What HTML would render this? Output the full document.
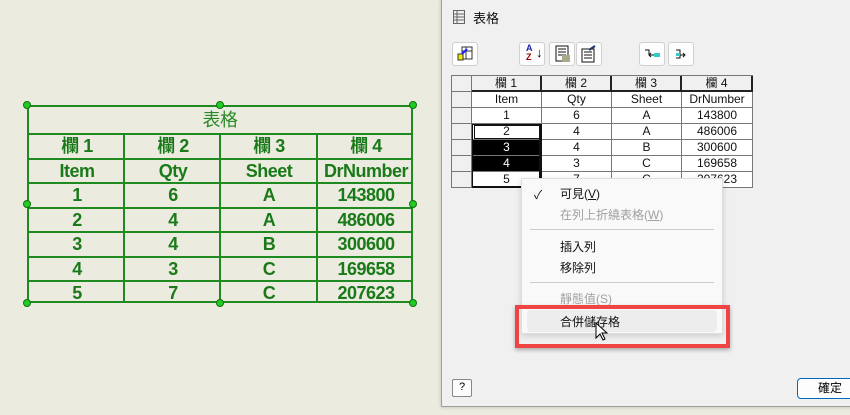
<!DOCTYPE html>
<html><head><meta charset="utf-8"><style>
*{margin:0;padding:0;box-sizing:border-box}
body{width:850px;height:415px;background:#ecebdf;position:relative;overflow:hidden;font-family:"Liberation Sans","Noto Sans CJK TC",sans-serif}
.abs{position:absolute}
.lt{position:absolute;left:27px;top:105px;width:386px;height:198px;border:2px solid #1f8a1f}
.lt .h{position:absolute;background:#1f8a1f;height:2px;left:0;right:0}
.lt .v{position:absolute;background:#1f8a1f;width:2px}
.lt .c{position:absolute;width:96px;text-align:center;color:#1a7a1a;font-size:18px;line-height:24px;font-weight:bold;letter-spacing:-0.5px}
.dot{position:absolute;width:8px;height:8px;border-radius:50%;background:#22cc22;border:1px solid #107010}
.dlg{position:absolute;left:441px;top:0;width:420px;height:407px;background:#f0f0f0;border-left:1px solid #a0a0a0;border-bottom:1px solid #a0a0a0;box-shadow:0 0 4px rgba(0,0,0,.2)}
.btn{position:absolute;top:42px;width:26px;height:24px;background:#fdfdfd;border:1px solid #d0d0d0;border-radius:3px}
.g{position:absolute;border-right:1px solid #777;border-bottom:1px solid #777;font-size:12px;text-align:center;line-height:15px;color:#111;background:#fff}
.rh{background:#f0f0f0}
.menu{position:absolute;left:521px;top:178px;width:202px;height:156px;background:#f9f9f9;border:1px solid #ddd;box-shadow:0 2px 6px rgba(0,0,0,.15);font-size:12px}
.mi{position:absolute;left:38px;color:#111}
.dis{color:#a0a0a0}
.sep{position:absolute;left:8px;right:8px;height:1px;background:#ccc}
</style></head><body>
<div class="lt">
 <div class="h" style="top:26px"></div><div class="h" style="top:51px"></div><div class="h" style="top:75px"></div><div class="h" style="top:100px"></div><div class="h" style="top:124px"></div><div class="h" style="top:149px"></div><div class="h" style="top:173px"></div>
 <div class="v" style="left:94px;top:26px;bottom:0"></div><div class="v" style="left:190px;top:26px;bottom:0"></div><div class="v" style="left:287px;top:26px;bottom:0"></div>
 <div class="c" style="left:0;width:382px;top:1px;color:#2a8a2a;font-weight:normal">表格</div>
 <div class="c" style="left:0;top:27px">欄 1</div><div class="c" style="left:96px;top:27px">欄 2</div><div class="c" style="left:192px;top:27px">欄 3</div><div class="c" style="left:289px;top:27px">欄 4</div>
 <div class="c" style="left:0;top:52px">Item</div><div class="c" style="left:96px;top:52px">Qty</div><div class="c" style="left:192px;top:52px">Sheet</div><div class="c" style="left:289px;top:52px">DrNumber</div>
 <div class="c" style="left:0;top:76px">1</div><div class="c" style="left:96px;top:76px">6</div><div class="c" style="left:192px;top:76px">A</div><div class="c" style="left:289px;top:76px">143800</div>
 <div class="c" style="left:0;top:101px">2</div><div class="c" style="left:96px;top:101px">4</div><div class="c" style="left:192px;top:101px">A</div><div class="c" style="left:289px;top:101px">486006</div>
 <div class="c" style="left:0;top:125px">3</div><div class="c" style="left:96px;top:125px">4</div><div class="c" style="left:192px;top:125px">B</div><div class="c" style="left:289px;top:125px">300600</div>
 <div class="c" style="left:0;top:150px">4</div><div class="c" style="left:96px;top:150px">3</div><div class="c" style="left:192px;top:150px">C</div><div class="c" style="left:289px;top:150px">169658</div>
 <div class="c" style="left:0;top:174px">5</div><div class="c" style="left:96px;top:174px">7</div><div class="c" style="left:192px;top:174px">C</div><div class="c" style="left:289px;top:174px">207623</div>
</div>
<div class="dot" style="left:23px;top:101px"></div><div class="dot" style="left:216px;top:101px"></div><div class="dot" style="left:409px;top:101px"></div>
<div class="dot" style="left:23px;top:200px"></div><div class="dot" style="left:409px;top:200px"></div>
<div class="dot" style="left:23px;top:299px"></div><div class="dot" style="left:216px;top:299px"></div><div class="dot" style="left:409px;top:299px"></div>

<div class="dlg">
 <svg class="abs" style="left:10px;top:9px" width="14" height="16"><g stroke="#666" fill="none"><rect x="1.5" y="1.5" width="11" height="13"/><path d="M1 5h12M1 8h12M1 11h12M5 1v14"/></g></svg>
 <div class="abs" style="left:31px;top:8px;font-size:13px;color:#111">表格</div>
</div>
<div class="btn" style="left:452px"><svg width="24" height="22"><rect x="9" y="4" width="10" height="12" fill="#fff" stroke="#333"/><path d="M9 8h10M13 4v12" stroke="#333"/><rect x="5" y="11" width="5" height="6" fill="#ee0" stroke="#333"/><path d="M9 11l5-5" stroke="#22f" stroke-width="2"/></svg></div>
<div class="btn" style="left:519px"><div class="abs" style="left:6px;top:1px;font-size:9px;font-weight:bold;color:#22a;line-height:9px">A<br><span style="color:#900">Z</span></div><div class="abs" style="left:16px;top:2px;font-size:13px">↓</div></div>
<div class="btn" style="left:549px"><svg width="24" height="22"><rect x="6" y="3" width="12" height="15" fill="#fff" stroke="#111"/><path d="M8 6h8M8 9h8M8 12h8" stroke="#111"/><rect x="12" y="12" width="8" height="7" fill="#aa8"/></svg></div>
<div class="btn" style="left:576px"><svg width="24" height="22"><rect x="5" y="6" width="12" height="13" fill="#fff" stroke="#111"/><path d="M7 9h8M7 12h8M7 15h8" stroke="#111"/><path d="M12 7l6-4" stroke="#236" stroke-width="2"/></svg></div>
<div class="btn" style="left:639px"><svg width="24" height="22"><path d="M5 7h4v5" stroke="#111" fill="none"/><rect x="14" y="10" width="6" height="4" fill="#3cc"/><path d="M9 12h5M11 10l-2 2 2 2" stroke="#111" fill="none"/></svg></div>
<div class="btn" style="left:668px"><svg width="24" height="22"><path d="M7 7h4v8h-4" stroke="#111" fill="none"/><rect x="7" y="10" width="4" height="3" fill="#3cc"/><path d="M11 12h5M14 10l2 2-2 2" stroke="#111" fill="none"/></svg></div>

<div class="abs" style="left:451px;top:75px;width:302px;height:113px;border-left:1px solid #777;border-top:1px solid #777;background:#777"></div>
<div id="grid"></div>
<script>
var cols=[[452,19],[472,69],[542,69],[612,69],[682,70]];
var rows=[["","欄 1","欄 2","欄 3","欄 4"],["","Item","Qty","Sheet","DrNumber"],["","1","6","A","143800"],["","2","4","A","486006"],["","3","4","B","300600"],["","4","3","C","169658"],["","5","7","C","207623"]];
var h="";
for(var r=0;r<7;r++)for(var c=0;c<5;c++){
 var st="left:"+cols[c][0]+"px;top:"+(76+r*16)+"px;width:"+(cols[c][1]+1)+"px;height:16px;";
 var cl="g";
 if(c==0||r==0)cl+=" rh";
 if(r==0&&c>0)st+="border-right:2px solid #222;border-bottom:2px solid #222;";
 if(c==1&&(r==4||r==5))st+="background:#000;color:#fff;";
 h+='<div class="'+cl+'" style="'+st+'">'+rows[r][c]+'</div>';
}
document.getElementById("grid").innerHTML=h;
</script>
<div class="abs" style="left:472px;top:124px;width:70px;height:64px;border:1px solid #111;border-right-width:3px;border-bottom-width:2px"></div>
<div class="abs" style="left:474px;top:125px;width:66px;height:14px;border:1px solid #111"></div>

<div class="menu">
 <div class="mi" style="left:12px;top:7px">✓</div>
 <div class="mi" style="top:6px">可見(<u>V</u>)</div>
 <div class="mi dis" style="top:27px">在列上折繞表格(<u>W</u>)</div>
 <div class="sep" style="top:50px"></div>
 <div class="mi" style="top:59px">插入列</div>
 <div class="mi" style="top:80px">移除列</div>
 <div class="sep" style="top:103px"></div>
 <div class="mi dis" style="top:111px">靜態值(S)</div>
 <div class="abs" style="left:5px;top:131px;width:190px;height:22px;background:#ededed;border-radius:4px"></div>
 <div class="mi" style="top:134px">合併儲存格</div>
</div>
<div class="abs" style="left:515px;top:305px;width:215px;height:43px;border:4px solid #ee4444;box-shadow:0 2px 4px rgba(0,0,0,.3)"></div>
<svg class="abs" style="left:595px;top:322px" width="14" height="20"><path d="M1 1v15l4-4 3 6 2-1-3-6h5z" fill="#fff" stroke="#000"/></svg>

<div class="abs" style="left:452px;top:379px;width:20px;height:18px;border:1px solid #888;border-radius:2px;background:#fbfbfb;font-size:11px;text-align:center;line-height:15px">?</div>
<div class="abs" style="left:797px;top:378px;width:60px;height:21px;border:1px solid #0067c0;border-radius:4px;background:#fdfdfd;font-size:12px;line-height:19px;padding-left:20px">確定</div>
</body></html>
